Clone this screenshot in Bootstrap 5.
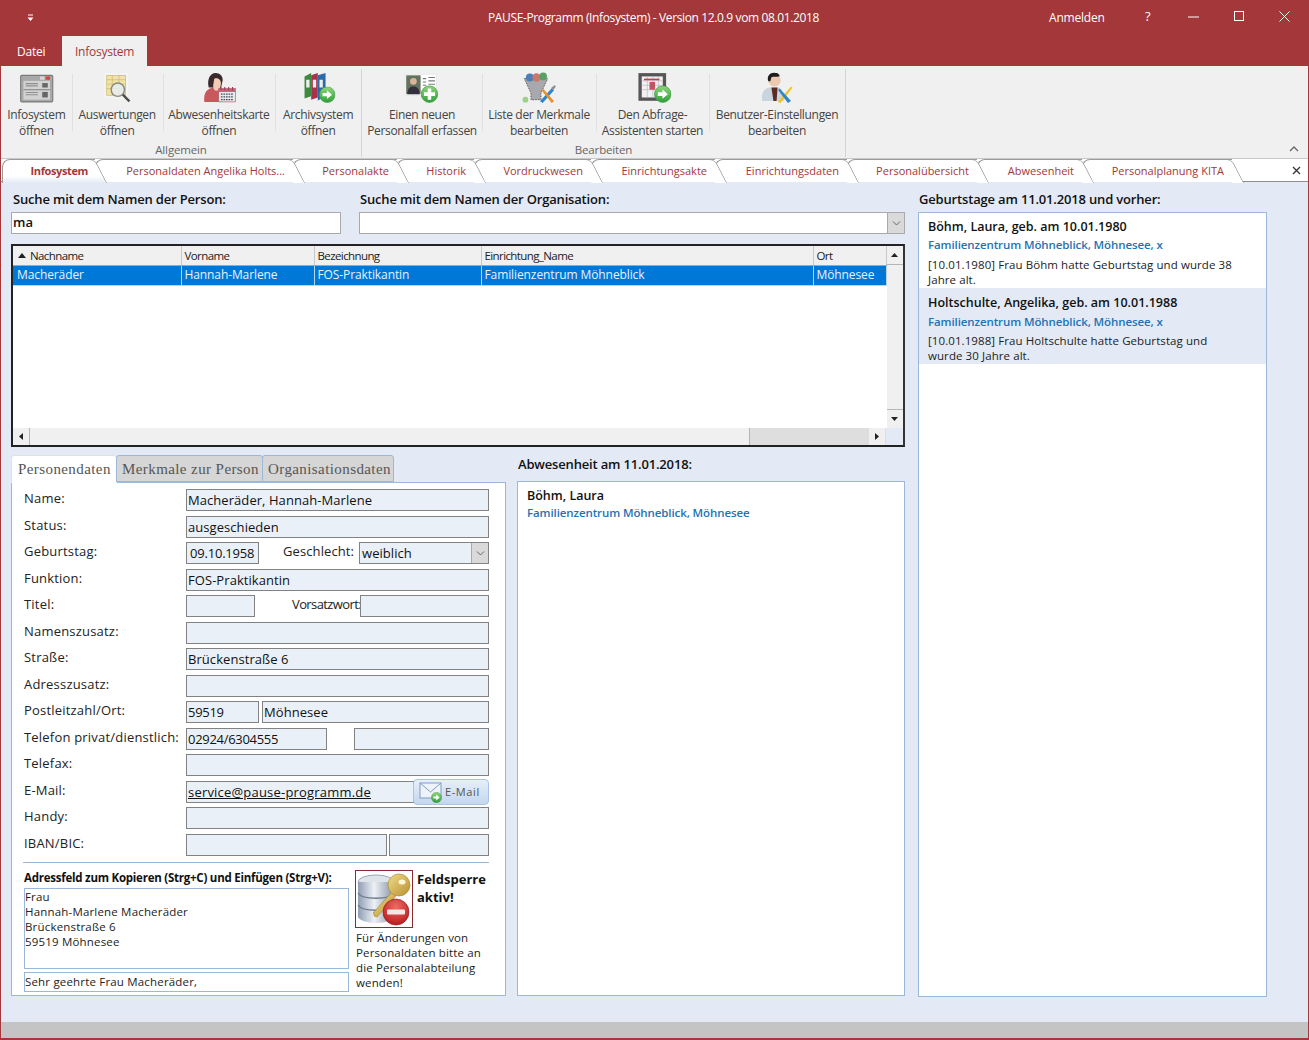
<!DOCTYPE html>
<html lang="de">
<head>
  <meta charset="UTF-8">
  <meta name="viewport" content="width=device-width, initial-scale=1.0">
  <title>PAUSE-Programm (Infosystem)</title>
  <link href="https://cdn.jsdelivr.net/npm/bootstrap@5.3.3/dist/css/bootstrap.min.css" rel="stylesheet">
  <script src="https://cdn.jsdelivr.net/npm/bootstrap@5.3.3/dist/js/bootstrap.bundle.min.js"></script>
  <style>
    html, body { height: 1040px; overflow: hidden; }
    body { font-family: "Open Sans", "Liberation Sans", sans-serif; font-size: 12px; color: #111; background: #a4373a; }
    .app { width: 1309px; height: 1040px; padding: 0 1px 2px 1px; }

    /* title bar and ribbon tabs */
    .titlebar { height: 36px; background: #a4373a; color: #fff; position: relative; }
    .titlebar .title { position: absolute; left: 487px; top: 9px; letter-spacing: -.37px; }
    .titlebar .login { position: absolute; left: 1048px; top: 9px; letter-spacing: -.2px; }
    .titlebar .help { position: absolute; left: 1144px; top: 7px; font-size: 13px; }
    .titlebar svg { position: absolute; }
    .titlebar .ico-qat { left: 26px; top: 14px; }
    .titlebar .ico-min { left: 1187px; top: 16px; }
    .titlebar .ico-max { left: 1233px; top: 11px; }
    .titlebar .ico-close { left: 1278px; top: 11px; }
    .menutabs { height: 30px; background: #a4373a; letter-spacing: -.25px; }
    .menutabs .item { width: 61px; padding: 7px 0 0 16px; color: #fff; }
    .menutabs .item.on { width: 85px; padding: 7px 0 0 13px; background: #f0f0f0; color: #a4373a; }

    .ribbon { height: 92px; background: #f0f0f0; position: relative; }
    .ribbon .rgroup { height: 88px; margin-top: 3px; border-right: 1px solid #d4d4d4; position: relative; }
    .ribbon .g1 { width: 361px; }
    .ribbon .g2 { width: 484px; }
    .ribbon .ritem { height: 64px; text-align: center; line-height: 16px; color: #444; padding-top: 3px; white-space: nowrap; position: relative; letter-spacing: -.33px; }
    .ribbon .ritem + .ritem::before { content: ""; position: absolute; left: 0; top: 5px; height: 57px; border-left: 1px solid #e0e0e0; }
    .ribbon .ritem svg { display: block; height: 31px; width: auto; margin: 0 auto 4px; }
    .ribbon .i71 { width: 71px; }
    .ribbon .i91 { width: 91px; }
    .ribbon .i113 { width: 113px; }
    .ribbon .i86 { width: 86px; }
    .ribbon .i120 { width: 120px; }
    .ribbon .i114 { width: 114px; }
    .ribbon .i136 { width: 136px; }
    .ribbon .rlabel { position: absolute; left: 0; right: 0; top: 72px; text-align: center; color: #666; font-size: 11.5px; letter-spacing: -.15px; }
    .ribbon .collapse-up { position: absolute; right: 9px; top: 80px; }

    /* document tabs */
    .doctabs { height: 24px; background: #fff; border-top: 1px solid #c9c9c9; border-bottom: 1px solid #8f8f8f; position: relative; padding-left: 1px; }
    .dtab { height: 23px; position: relative; color: #a4373a; font-size: 11px; text-align: right; padding: 3px 8px 0 0; letter-spacing: 0; white-space: nowrap; border-top-left-radius: 8px; border-left: 1px solid #9a9a9a; border-top: 1px solid #9a9a9a; background: #fff; }
    .dtab::after { content: ""; position: absolute; right: -6px; top: -1px; width: 12px; height: 24px; border-top: 1px solid #9a9a9a; border-right: 1px solid #8f8f8f; border-top-right-radius: 6px; transform: skewX(27deg); background: #fff; z-index: 1; }
    .dtab.on { font-weight: 700; letter-spacing: -.38px; padding-right: 7px; background: linear-gradient(#fff, #fff 70%, #e3eaf5); height: 24px; margin-bottom: -1px; z-index: 2; }
    .dtab.on::after { background: linear-gradient(#fff, #fff 70%, #e3eaf5); }
    .dtab span { position: relative; z-index: 2; }
    .dtab.t93 { width: 93px; }
    .dtab.t198 { width: 198px; }
    .dtab.t104 { width: 104px; }
    .dtab.t77 { width: 77px; }
    .dtab.t117 { width: 117px; }
    .dtab.t124 { width: 124px; }
    .dtab.t132 { width: 132px; }
    .dtab.t130 { width: 130px; }
    .dtab.t105 { width: 105px; }
    .dtab.t150 { width: 150px; }
    .doctabs .close-x { position: absolute; right: 7px; top: 7px; }

    /* main area */
    .main { height: 840px; background: #e3eaf5; padding: 0 0 0 10px; }
    .left { width: 894px; }
    .right { width: 349px; margin-left: 13px; }
    .head { font-weight: 600; font-size: 13px; color: #111; line-height: 18px; letter-spacing: -.17px; }
    .search-row { padding-top: 8px; }
    .search-person { width: 330px; }
    .search-person .head { padding-left: 2px; }
    .search-org { width: 546px; margin-left: 18px; }
    .search-org .head { padding-left: 1px; }
    .box-search { height: 22px; margin-top: 4px; background: #fff; border: 1px solid #a9a9a9; padding-left: 1px; font-weight: 600; font-size: 13px; line-height: 19px; }
    .ddbtn { width: 17px; height: 20px; background: #d9d9d9; border-left: 1px solid #a9a9a9; }

    /* data grid */
    .grid { height: 203px; margin-top: 10px; background: #fff; border: 2px solid #222; border-right-color: #333; }
    .grid-top { min-height: 0; }
    .grid table { table-layout: fixed; width: 873px; margin: 0; font-size: 11.5px; }
    .grid .c1 { width: 168px; }
    .grid .c2 { width: 133px; }
    .grid .c3 { width: 167px; }
    .grid .c4 { width: 332px; }
    .grid .c5 { width: 73px; }
    .grid th { font-weight: 400; background: #f0f0f0; height: 19px; padding: 0 3px; line-height: 18px; border-right: 1px solid #c8c8c8; border-bottom: 1px solid #a5a5a5; color: #222; letter-spacing: -.6px; white-space: nowrap; }
    .grid th:first-child { padding-left: 5px; }
    .grid th svg { vertical-align: 2px; }
    .grid td { background: #0078d7; color: #e8f2fb; height: 20px; padding: 0 3px; line-height: 18px; border-right: 1px solid #b9d4ee; border-bottom: 1px solid #b9d4ee; font-size: 12px; white-space: nowrap; letter-spacing: -.1px; }
    .grid td:first-child { padding-left: 4px; }
    .vscroll { width: 17px; background: #f0f0f0; }
    .sbtn { height: 19px; background: #f0f0f0; border-bottom: 1px solid #b5b5b5; display: flex; align-items: center; justify-content: center; }
    .sbtn.down { border-top: 1px solid #b5b5b5; border-bottom: 0; }
    .hscroll { height: 17px; background: #dedede; margin-top: auto; }
    .hscroll .sb { width: 16px; background: #f0f0f0; display: flex; align-items: center; justify-content: center; }
    .hscroll .sb.end { margin-left: 119px; }
    .hscroll .thumb { width: 721px; background: #f0f0f0; border-left: 1px solid #b5b5b5; border-right: 1px solid #b5b5b5; }
    .hscroll .corner { width: 17px; background: #e3eaf5; margin-left: auto; }
    .lower { margin-top: 8px; }

    /* person tabs */
    .ptabs { width: 495px; }
    .ptabs .nav { border: 0; height: 27px; font-family: "Liberation Serif", serif; font-size: 15px; letter-spacing: .41px; position: relative; z-index: 1; }
    .ptabs .nav-link { height: 27px; padding: 2px 0 0 5px; color: #555; background: #d6d6d6; border: 1px solid #9cb8d8; border-radius: 3px 3px 0 0; margin: 0 -1px 0 0; white-space: nowrap; }
    .ptabs .nav-link.active { background: #fff; color: #555; border-bottom-color: #fff; height: 28px; width: 106px; padding-left: 6px; }
    .ptabs .tab2 { width: 147px; }
    .ptabs .tab3 { width: 132px; }
    .panel { background: #fff; border: 1px solid #9cb8d8; }
    .ppanel { height: 514px; padding: 6px 16px 0 12px; }
    .frow { height: 22px; margin-bottom: 4.54px; font-size: 13px; color: #222; }
    .frow > .lbl { width: 162px; line-height: 18px; white-space: nowrap; letter-spacing: .2px; }
    .fld { height: 22px; background: #eaf0f8; border: 1px solid #828282; padding: 0 1px; font-size: 13px; line-height: 20px; white-space: nowrap; color: #111; letter-spacing: .06px; }
    .fld.num { letter-spacing: -.3px; }
    .fld.mail { letter-spacing: .2px; }
    .fld.date { padding-left: 3px; letter-spacing: -.2px; }
    .fld.combo { padding-right: 0; padding-left: 2px; }
    .w73 { width: 73px; }
    .w130 { width: 130px; }
    .w69 { width: 69px; }
    .w129 { width: 129px; }
    .w141 { width: 141px; }
    .w201 { width: 201px; }
    .gap3 { margin-left: 3px; }
    .gap2x { margin-left: 2px; }
    .gap27 { margin-left: 27px; }
    .slbl { line-height: 18px; white-space: nowrap; letter-spacing: .1px; }
    .slbl.geschlecht { margin-left: 24px; width: 76px; }
    .slbl.vorsatz { margin-left: 37px; width: 68px; letter-spacing: -.6px; }
    .mailbtn { width: 76px; height: 26px; margin: -2px 0 0 -1px; border: 1px solid #a9c4e4; border-radius: 4px; background: linear-gradient(#e7eff9, #c3d7ef); color: #555; font-size: 11px; letter-spacing: .6px; position: relative; }
    .mailbtn svg { margin: 0 -2px 0 5px; }
    .divider { border-top: 1px solid #9cb8d8; margin: 6px 1px 0 -1px; width: 466px; }
    .addr-col { width: 325px; flex-shrink: 0; }
    .addr-head { font-weight: 700; font-size: 11.5px; line-height: 15px; margin-top: 7px; letter-spacing: -.24px; }
    .addr { border: 1px solid #9cb8d8; background: #fff; padding: 0; font-size: 11.5px; line-height: 15px; letter-spacing: .18px; color: #222; white-space: nowrap; }
    .addr.big { height: 81px; margin-top: 3px; }
    .addr.small { height: 20px; margin-top: 3px; line-height: 17px; }
    .lock-col { margin-left: 6px; padding-top: 7px; width: 136px; }
    .lock { width: 58px; height: 58px; border: 1px solid #8c2a2e; }
    .lock-title { font-weight: 700; font-size: 13px; line-height: 18px; padding-left: 4px; }
    .lock-text { font-size: 11.5px; line-height: 15px; letter-spacing: .14px; margin-top: 2px; padding-left: 1px; color: #222; }

    /* absence and birthday */
    .abs { width: 388px; margin-left: 11px; }
    .abs .head { height: 26px; padding-left: 1px; }
    .abs .panel { height: 515px; padding: 5px 9px; }
    .abs .porg { margin-top: -1px; }
    .pname { font-weight: 600; font-size: 12.5px; line-height: 18px; }
    .porg { font-weight: 600; font-size: 11.5px; color: #1d73b6; line-height: 17px; letter-spacing: -.1px; }
    .right .head { padding: 8px 0 0 1px; height: 30px; }
    .bday { height: 785px; }
    .bitem { padding: 5px 25px 1px 9px; }
    .bitem.alt { background: #e3eaf5; padding-top: 6px; }
    .bitem.alt .porg { margin-top: 1px; }
    .btext { font-size: 11.5px; line-height: 15px; letter-spacing: .08px; margin-top: 4px; color: #222; }
    .bitem.alt .btext { margin-top: 3px; }
    .footbar { height: 16px; background: #c4c4c4; }
  </style>
</head>
<body>
  <svg width="0" height="0" class="position-absolute">
    <defs>
      <linearGradient id="gGreen" x1="0" y1="0" x2="0" y2="1"><stop offset="0" stop-color="#8fd67a"/><stop offset="1" stop-color="#2f9e3a"/></linearGradient>
      <linearGradient id="gSteel" x1="0" y1="0" x2="1" y2="0"><stop offset="0" stop-color="#8e9db3"/><stop offset=".45" stop-color="#eef1f5"/><stop offset="1" stop-color="#8392a8"/></linearGradient>
      <linearGradient id="gGold" x1="0" y1="0" x2="1" y2="1"><stop offset="0" stop-color="#f0dc8c"/><stop offset="1" stop-color="#b8912f"/></linearGradient>
      <radialGradient id="gRed" cx=".5" cy=".3" r=".8"><stop offset="0" stop-color="#f06a63"/><stop offset="1" stop-color="#b21218"/></radialGradient>
      <symbol id="goArrow" viewBox="0 0 16 16">
        <circle cx="8" cy="8" r="7.5" fill="url(#gGreen)" stroke="#3f9a45" stroke-width=".6"/>
        <path d="M3.5 6.4h4.2V3.8L12.6 8l-4.9 4.2V9.6H3.5z" fill="#fff"/>
      </symbol>
      <symbol id="goPlus" viewBox="0 0 16 16">
        <circle cx="8" cy="8" r="7.5" fill="url(#gGreen)" stroke="#3f9a45" stroke-width=".6"/>
        <path d="M6.4 3h3.2v3.4H13v3.2H9.6V13H6.4V9.6H3V6.4h3.4z" fill="#fff"/>
      </symbol>
      <symbol id="tools" viewBox="0 0 16 16">
        <path d="M2 14.5 12 3.5l2 1.6L4.3 16z" fill="#2e86c9"/>
        <path d="M14 14.5 5 4l-1.6 1.4L12 16z" fill="#e8912b"/>
        <path d="M11.5 3.2 14.5.8l1 1.4-2.4 3z" fill="#8a8f96"/>
      </symbol>
    </defs>
  </svg>

  <div class="app d-flex flex-column">
    <!-- title bar -->
    <div class="titlebar">
      <svg class="ico-qat" width="7" height="8" viewBox="0 0 7 8"><path d="M1 1h5" stroke="#fff"/><path d="M.5 3.5h6L3.500 7z" fill="#fff"/></svg>
      <div class="title">PAUSE-Programm (Infosystem) - Version 12.0.9 vom 08.01.2018</div>
      <div class="login">Anmelden</div>
      <div class="help">?</div>
      <svg class="ico-min" width="11" height="2"><path d="M0 1h11" stroke="#fff"/></svg>
      <svg class="ico-max" width="10" height="10"><rect x=".5" y=".5" width="9" height="9" fill="none" stroke="#fff"/></svg>
      <svg class="ico-close" width="11" height="11"><path d="M.5.500l10 10M10.500.500l-10 10" stroke="#fff" fill="none"/></svg>
    </div>
    <div class="menutabs d-flex">
      <div class="item">Datei</div>
      <div class="item on">Infosystem</div>
    </div>

    <!-- ribbon -->
    <div class="ribbon d-flex">
      <div class="rgroup g1">
        <div class="d-flex">
          <div class="ritem i71">
            <svg viewBox="0 0 32 28"><rect x="1.500" y="3" width="29" height="24" rx="1" fill="#a8a8a8" stroke="#7a7a7a"/><rect x="4" y="8" width="24" height="17" fill="#d2d2d2"/><rect x="4" y="15.500" width="24" height="1" fill="#888"/><path d="M6 10.500h11M6 12.500h11M6 18.500h11M6 20.500h11" stroke="#8f8f8f"/><rect x="21" y="10" width="5" height="4" fill="#666"/><rect x="21" y="18" width="5" height="5" fill="#666"/><rect x="19" y="4" width="4" height="3" fill="#d5d5d5"/><rect x="24" y="4" width="4" height="3" fill="#d8453c"/></svg>
            Infosystem<br>öffnen
          </div>
          <div class="ritem i91">
            <svg viewBox="0 0 32 28"><rect x="5" y="1" width="21" height="23" fill="#f5f5f0"/><rect x="7" y="3" width="17" height="18" fill="#f1e4a6" stroke="#c8b565" stroke-width=".6"/><path d="M7 7h17M7 11h17M7 15h17M12 3v18M18 3v18" stroke="#c8b565" stroke-width=".6"/><circle cx="17" cy="16" r="6" fill="#e8eef2" fill-opacity=".85" stroke="#8a8a8a" stroke-width="1.300"/><path d="m21.500 20.500 6 6" stroke="#4d4d4d" stroke-width="2.200"/></svg>
            Auswertungen<br>öffnen
          </div>
          <div class="ritem i113">
            <svg viewBox="0 0 32 28"><path d="M3 27c-1-9 3-12 8-13l5 0c3 1 4 3 4 6v7z" fill="#c9585c"/><path d="M7 14C5 6 9 1 13 1c5 0 8 4 6 9l-1 5-3-1z" fill="#3a2a2c"/><path d="M12 6c3-1 6 1 6 4 0 4-2 7-4 7s-3-2-3-5z" fill="#f2cdb6"/><rect x="16" y="15" width="15" height="12" fill="#e9e9ee" stroke="#b5586a" stroke-width=".6"/><rect x="16" y="15" width="15" height="3" fill="#c85f75"/><path d="M18 13.500v3M21.500 13.500v3M25 13.500v3M28.500 13.500v3" stroke="#96405a"/><path d="M18 20h11M18 22.500h11M18 25h11" stroke="#4a4a55" stroke-width="1.200" stroke-dasharray="1.500 .8"/></svg>
            Abwesenheitskarte<br>öffnen
          </div>
          <div class="ritem i86">
            <svg viewBox="0 0 34 28"><path d="M5 4 11 1v21l-6 2z" fill="#3c8a3f"/><path d="M11 3 17 1v22l-6 2z" fill="#a8324a"/><path d="M17 3 24 1v20l-7 5z" fill="#2a6aa8"/><rect x="6.500" y="7" width="3" height="7" fill="#eee"/><rect x="12.500" y="7" width="3" height="7" fill="#eee"/><rect x="18.500" y="7" width="3" height="7" fill="#eee"/><use href="#goArrow" x="18" y="13" width="15" height="15"/></svg>
            Archivsystem<br>öffnen
          </div>
        </div>
        <div class="rlabel">Allgemein</div>
      </div>
      <div class="rgroup g2">
        <div class="d-flex">
          <div class="ritem i120">
            <svg viewBox="0 0 32 28"><rect x="1" y="2" width="28" height="19" fill="#fff" stroke="#dedede" stroke-width=".5"/><rect x="2" y="3" width="13" height="17" fill="#62735f"/><circle cx="8.500" cy="8.500" r="3" fill="#d8b49a"/><path d="M3 20c0-6 3-7 5.500-7s5.500 1 5.500 7z" fill="#33303b"/><path d="M17 6h3M17 9h3M17 12h3M22 5h6M22 8h6M22 11h6" stroke="#7a7a7a"/><use href="#goPlus" x="15" y="12" width="16" height="16"/></svg>
            Einen neuen<br>Personalfall erfassen
          </div>
          <div class="ritem i114">
            <svg viewBox="0 0 32 28"><path d="M3 6h21l-6 13v6h-9v-6z" fill="#a9a9ad" stroke="#555" stroke-width=".8" stroke-dasharray="1.500 1"/><circle cx="8" cy="5" r="3.600" fill="#4a7fb8"/><circle cx="14" cy="5" r="3.800" fill="#c9786a"/><circle cx="20" cy="4" r="3.500" fill="#5aa066"/><circle cx="4" cy="25" r="2.600" fill="#9fd08a"/><use href="#tools" x="15" y="11" width="17" height="17"/></svg>
            Liste der Merkmale<br>bearbeiten
          </div>
          <div class="ritem i113">
            <svg viewBox="0 0 34 28"><rect x="4" y="1" width="25" height="25" fill="#565656"/><rect x="7" y="4" width="19" height="19" fill="#f2f2f2"/><path d="M7 8h19M7 12h19M7 16h19M12 4v19M17 4v19M22 4v19" stroke="#b5b5c4" stroke-width=".6"/><rect x="14" y="9" width="5" height="7" fill="#c85060"/><rect x="9" y="6" width="14" height="1.500" fill="#b8434c"/><use href="#goArrow" x="18" y="12" width="16" height="16"/></svg>
            Den Abfrage-<br>Assistenten starten
          </div>
          <div class="ritem i136">
            <svg viewBox="0 0 34 30"><path d="M3 28c-1-8 2-12 7-13h9c3 1 5 5 5 13z" fill="#c9d4df"/><path d="M12 15l2 13h3l1-13z" fill="#5c2b22"/><circle cx="15" cy="8" r="6" fill="#ecc9ae"/><path d="M9 9c-2-6 3-9 7-8 3 0 4 2 4 3-3 1-6 0-8 1l-1 4z" fill="#1f1d1c"/><path d="M18 29 31 14l1.500 1.300L21 30z" fill="#f0c52c"/><path d="M31 28 20 16l-1.500 1.300L28 30z" fill="#2e86c9"/></svg>
            Benutzer-Einstellungen<br>bearbeiten
          </div>
        </div>
        <div class="rlabel">Bearbeiten</div>
      </div>
      <svg class="collapse-up" width="10" height="6" viewBox="0 0 10 6"><path d="m1 5 4-4 4 4" fill="none" stroke="#666" stroke-width="1.300"/></svg>
    </div>

    <!-- document tabs -->
    <div class="doctabs d-flex">
      <div class="dtab on t93"><span>Infosystem</span></div>
      <div class="dtab t198"><span>Personaldaten Angelika Holts...</span></div>
      <div class="dtab t104"><span>Personalakte</span></div>
      <div class="dtab t77"><span>Historik</span></div>
      <div class="dtab t117"><span>Vordruckwesen</span></div>
      <div class="dtab t124"><span>Einrichtungsakte</span></div>
      <div class="dtab t132"><span>Einrichtungsdaten</span></div>
      <div class="dtab t130"><span>Personalübersicht</span></div>
      <div class="dtab t105"><span>Abwesenheit</span></div>
      <div class="dtab t150"><span>Personalplanung KITA</span></div>
      <svg class="close-x" width="9" height="9" viewBox="0 0 9 9"><path d="m1 1 7 7M8 1 1 8" stroke="#333" stroke-width="1.300"/></svg>
    </div>

    <!-- main -->
    <div class="main d-flex flex-grow-0">
      <div class="left d-flex flex-column">
        <div class="d-flex search-row">
          <div class="search-person"><div class="head">Suche mit dem Namen der Person:</div><div class="box-search">ma</div></div>
          <div class="search-org"><div class="head">Suche mit dem Namen der Organisation:</div>
            <div class="box-search d-flex justify-content-end">
              <div class="ddbtn d-flex align-items-center justify-content-center"><svg width="9" height="5" viewBox="0 0 9 5"><path d="m1 .5 3.500 3.500L8 .5" fill="none" stroke="#666"/></svg></div>
            </div>
          </div>
        </div>

        <div class="grid d-flex flex-column">
          <div class="grid-top d-flex flex-grow-1">
            <table class="table table-borderless align-self-start">
              <colgroup><col class="c1"><col class="c2"><col class="c3"><col class="c4"><col class="c5"></colgroup>
              <thead><tr>
                <th><svg class="me-1" width="8" height="5" viewBox="0 0 8 5"><path d="M0 5 4 0l4 5z" fill="#222"/></svg>Nachname</th><th>Vorname</th><th>Bezeichnung</th><th>Einrichtung_Name</th><th>Ort</th>
              </tr></thead>
              <tbody><tr><td>Macheräder</td><td>Hannah-Marlene</td><td>FOS-Praktikantin</td><td>Familienzentrum Möhneblick</td><td>Möhnesee</td></tr></tbody>
            </table>
            <div class="vscroll d-flex flex-column ms-auto">
              <div class="sbtn"><svg width="7" height="4" viewBox="0 0 7 4"><path d="M0 4 3.500 0 7 4z" fill="#222"/></svg></div>
              <div class="sbtn down mt-auto"><svg width="7" height="4" viewBox="0 0 7 4"><path d="M0 0 3.500 4 7 0z" fill="#222"/></svg></div>
            </div>
          </div>
          <div class="hscroll d-flex">
            <div class="sb"><svg width="4" height="7" viewBox="0 0 4 7"><path d="M4 0 0 3.500 4 7z" fill="#222"/></svg></div>
            <div class="thumb"></div>
            <div class="sb end"><svg width="4" height="7" viewBox="0 0 4 7"><path d="M0 0 4 3.500 0 7z" fill="#222"/></svg></div>
            <div class="corner"></div>
          </div>
        </div>

        <div class="d-flex lower">
          <!-- person tabs -->
          <div class="ptabs">
            <ul class="nav nav-tabs">
              <li class="nav-item"><a class="nav-link active" href="#">Personendaten</a></li>
              <li class="nav-item"><a class="nav-link tab2" href="#">Merkmale zur Person</a></li>
              <li class="nav-item"><a class="nav-link tab3" href="#">Organisationsdaten</a></li>
            </ul>
            <div class="panel ppanel">
              <div class="frow d-flex"><div class="lbl">Name:</div><div class="fld flex-grow-1">Macheräder, Hannah-Marlene</div></div>
              <div class="frow d-flex"><div class="lbl">Status:</div><div class="fld flex-grow-1">ausgeschieden</div></div>
              <div class="frow d-flex">
                <div class="lbl">Geburtstag:</div>
                <div class="fld date w73">09.10.1958</div>
                <div class="slbl geschlecht">Geschlecht:</div>
                <div class="fld combo w130 d-flex justify-content-between">weiblich
                  <div class="ddbtn d-flex align-items-center justify-content-center"><svg width="9" height="5" viewBox="0 0 9 5"><path d="m1 .5 3.500 3.500L8 .5" fill="none" stroke="#666"/></svg></div>
                </div>
              </div>
              <div class="frow d-flex"><div class="lbl">Funktion:</div><div class="fld flex-grow-1">FOS-Praktikantin</div></div>
              <div class="frow d-flex">
                <div class="lbl">Titel:</div>
                <div class="fld w69"></div>
                <div class="slbl vorsatz">Vorsatzwort:</div>
                <div class="fld w129"></div>
              </div>
              <div class="frow d-flex"><div class="lbl">Namenszusatz:</div><div class="fld flex-grow-1"></div></div>
              <div class="frow d-flex"><div class="lbl">Straße:</div><div class="fld flex-grow-1">Brückenstraße 6</div></div>
              <div class="frow d-flex"><div class="lbl">Adresszusatz:</div><div class="fld flex-grow-1"></div></div>
              <div class="frow d-flex">
                <div class="lbl">Postleitzahl/Ort:</div>
                <div class="fld num w73">59519</div>
                <div class="fld gap3 flex-grow-1">Möhnesee</div>
              </div>
              <div class="frow d-flex">
                <div class="lbl">Telefon privat/dienstlich:</div>
                <div class="fld num w141">02924/6304555</div>
                <div class="fld gap27 flex-grow-1"></div>
              </div>
              <div class="frow d-flex"><div class="lbl">Telefax:</div><div class="fld flex-grow-1"></div></div>
              <div class="frow d-flex">
                <div class="lbl">E-Mail:</div>
                <div class="fld mail flex-grow-1 text-decoration-underline">service@pause-programm.de</div>
                <div class="mailbtn d-flex align-items-center flex-shrink-0">
                  <svg width="28" height="24" viewBox="0 0 28 24"><rect x="1" y="3" width="21" height="15" fill="#eef3fa" stroke="#7f9cc4"/><path d="m1 3 10.500 9L22 3" fill="none" stroke="#7f9cc4"/><use href="#goArrow" x="12" y="12" width="11" height="11"/></svg>E-Mail
                </div>
              </div>
              <div class="frow d-flex"><div class="lbl">Handy:</div><div class="fld flex-grow-1"></div></div>
              <div class="frow d-flex">
                <div class="lbl">IBAN/BIC:</div>
                <div class="fld w201"></div>
                <div class="fld gap2x flex-grow-1"></div>
              </div>

              <div class="divider"></div>
              <div class="d-flex">
                <div class="addr-col">
                  <div class="addr-head">Adressfeld zum Kopieren (Strg+C) und Einfügen (Strg+V):</div>
                  <div class="addr big">Frau<br>Hannah-Marlene Macheräder<br>Brückenstraße 6<br>59519 Möhnesee</div>
                  <div class="addr small">Sehr geehrte Frau Macheräder,</div>
                </div>
                <div class="lock-col">
                  <div class="d-flex">
                    <div class="lock flex-shrink-0">
                      <svg width="56" height="56" viewBox="0 0 56 56"><ellipse cx="20" cy="11" rx="18" ry="7" fill="#dfe3ea" stroke="#9aa5b5"/><rect x="2" y="11" width="36" height="34" fill="url(#gSteel)"/><ellipse cx="20" cy="45" rx="18" ry="7" fill="url(#gSteel)"/><path d="M2 22c4 7 32 7 36 0M2 34c4 7 32 7 36 0" fill="none" stroke="#6e7d92" stroke-width="1.500"/><path d="m17 42 19-21 4 4-19 21-3-1v-3z" fill="url(#gGold)" stroke="#a5832c" stroke-width=".6"/><circle cx="43" cy="14" r="11" fill="url(#gGold)" stroke="#a5832c" stroke-width=".6"/><ellipse cx="46" cy="11" rx="3.500" ry="2.500" fill="#fff6d8"/><circle cx="40" cy="41" r="13" fill="url(#gRed)" stroke="#8f1015" stroke-width=".6"/><rect x="31" y="38.500" width="18" height="5" rx="1" fill="#f4e8e4"/></svg>
                    </div>
                    <div class="lock-title">Feldsperre aktiv!</div>
                  </div>
                  <div class="lock-text">Für Änderungen von Personaldaten bitte an die Personalabteilung wenden!</div>
                </div>
              </div>
            </div>
          </div>

          <!-- absence -->
          <div class="abs">
            <div class="head">Abwesenheit am 11.01.2018:</div>
            <div class="panel">
              <div class="pname">Böhm, Laura</div>
              <div class="porg">Familienzentrum Möhneblick, Möhnesee</div>
            </div>
          </div>
        </div>
      </div>

      <!-- birthdays -->
      <div class="right">
        <div class="head">Geburtstage am 11.01.2018 und vorher:</div>
        <div class="panel bday">
          <div class="bitem">
            <div class="pname">Böhm, Laura, geb. am 10.01.1980</div>
            <div class="porg">Familienzentrum Möhneblick, Möhnesee, x</div>
            <div class="btext">[10.01.1980] Frau Böhm hatte Geburtstag und wurde 38 Jahre alt.</div>
          </div>
          <div class="bitem alt">
            <div class="pname">Holtschulte, Angelika, geb. am 10.01.1988</div>
            <div class="porg">Familienzentrum Möhneblick, Möhnesee, x</div>
            <div class="btext">[10.01.1988] Frau Holtschulte hatte Geburtstag und wurde 30 Jahre alt.</div>
          </div>
        </div>
      </div>
    </div>
    <div class="footbar"></div>
  </div>
</body>
</html>
